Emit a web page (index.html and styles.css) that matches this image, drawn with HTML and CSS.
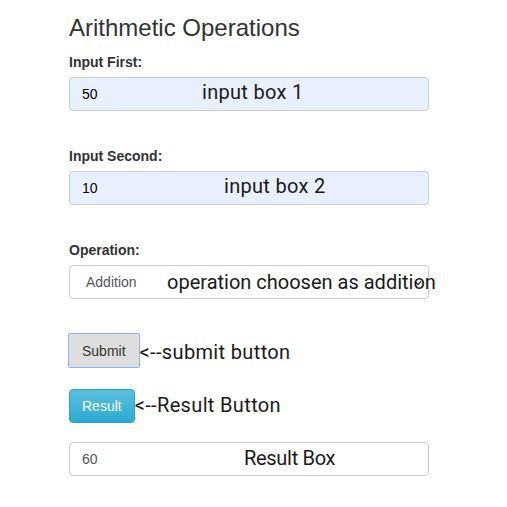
FILE: index.html
```html
<!DOCTYPE html>
<html>
<head>
<meta charset="utf-8">
<title>Arithmetic Operations</title>
<link rel="stylesheet" href="styles.css">
</head>
<body>
<div class="page">
  <h3 class="title">Arithmetic Operations</h3>

  <div class="group">
    <label class="label">Input First:</label>
    <div class="field field-filled">
      <span class="value">50</span>
      <span class="note note-1">input box 1</span>
    </div>
  </div>

  <div class="group">
    <label class="label">Input Second:</label>
    <div class="field field-filled">
      <span class="value">10</span>
      <span class="note note-2">input box 2</span>
    </div>
  </div>

  <div class="group group-last">
    <label class="label">Operation:</label>
    <div class="field field-select">
      <span class="value value-select">Addition</span>
      <svg class="caret" width="8" height="6" viewBox="0 0 8 6"><path d="M1 1.5 L4 4.5 L7 1.5" fill="none" stroke="#333" stroke-width="1.4"/></svg>
      <span class="note note-3">operation choosen as addition</span>
    </div>
  </div>

  <div class="btn-row btn-row-submit">
    <button class="btn btn-submit">Submit</button><span class="btn-note btn-note-submit">&lt;--submit button</span>
  </div>

  <div class="btn-row btn-row-result">
    <button class="btn btn-result">Result</button><span class="btn-note btn-note-result">&lt;--Result Button</span>
  </div>

  <div class="field field-result">
    <span class="value value-result">60</span>
    <span class="note note-4">Result Box</span>
  </div>
</div>
</body>
</html>
```

FILE: styles.css
```css
* { box-sizing: border-box; }

body {
  margin: 0;
  background: #fff;
  font-family: "Liberation Sans", Arial, sans-serif;
  font-size: 14px;
  color: #333;
}

.page {
  width: 429px;
  padding: 15px 0 0 69px;
}

.title {
  margin: 0 0 11px;
  font-size: 24px;
  line-height: 26px;
  font-weight: normal;
  color: #333;
}

.group {
  margin-bottom: 35px;
}

.group-last {
  margin-bottom: 0;
}

.label {
  display: block;
  font-weight: bold;
  font-size: 14px;
  line-height: 20px;
  margin-bottom: 5px;
  color: #333;
}

.field {
  position: relative;
  display: flex;
  align-items: center;
  width: 360px;
  height: 34px;
  border: 1px solid #ccc;
  border-radius: 4px;
  padding: 0 12px;
  background: #fff;
  font-size: 14px;
}

.field-filled {
  background: #e8f0fe;
  color: #000;
}

.value-select {
  padding-left: 4px;
  color: #555;
}

.value-result {
  color: #555;
}

.caret {
  position: absolute;
  right: 6px;
  top: 14px;
}

.note {
  position: absolute;
  top: -1px;
  font-family: Roboto, "Noto Sans", sans-serif;
  font-size: 20px;
  line-height: 30px;
  letter-spacing: 0.3px;
  color: #1a1a1a;
  white-space: nowrap;
}

.note-1 { left: 132px; }
.note-2 { left: 154px; }
.note-3 { left: 97px; top: 1px; letter-spacing: 0; }
.note-4 { left: 174px; top: 0; letter-spacing: -0.3px; }

.btn-row {
  display: flex;
  align-items: center;
}

.btn-row-submit {
  margin-top: 34px;
  margin-left: -1px;
}

.btn-row-result {
  margin-top: 21px;
  margin-bottom: 19px;
}

.btn {
  font-family: "Liberation Sans", Arial, sans-serif;
  font-size: 14px;
  line-height: 20px;
  padding: 0 12px;
  cursor: pointer;
}

.btn-submit {
  height: 35px;
  padding: 0 13px;
  background: #dedede;
  border: 1px solid #8fb3f6;
  border-radius: 2px;
  color: #333;
}

.btn-result {
  height: 34px;
  background: linear-gradient(#5bc0de, #2aabd2);
  border: 1px solid #28a4c9;
  border-radius: 4px;
  color: #fff;
}

.btn-note {
  position: relative;
  font-family: Roboto, "Noto Sans", sans-serif;
  font-size: 20px;
  line-height: 30px;
  letter-spacing: 0.35px;
  color: #1a1a1a;
  white-space: nowrap;
}

.btn-note-submit {
  top: 1px;
}

.btn-note-result {
  top: -1px;
}
```
